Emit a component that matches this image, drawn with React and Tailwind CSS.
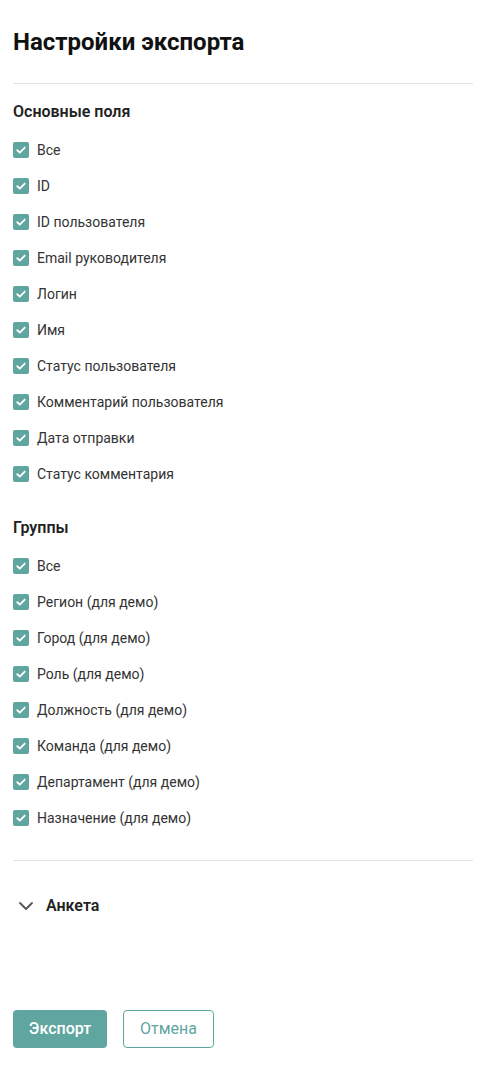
import React from "react";

const main = ["Все","ID","ID пользователя","Email руководителя","Логин","Имя","Статус пользователя","Комментарий пользователя","Дата отправки","Статус комментария"];
const groups = ["Все","Регион (для демо)","Город (для демо)","Роль (для демо)","Должность (для демо)","Команда (для демо)","Департамент (для демо)","Назначение (для демо)"];

function Row({ label }) {
  return (
    <label className="flex items-center h-[36px] gap-[8px] cursor-pointer">
      <span className="w-[16px] h-[16px] rounded-[2px] bg-[#5fa6a0] flex items-center justify-center shrink-0">
        <svg width="12" height="12" viewBox="0 0 12 12" fill="none">
          <path d="M2.3 6.2 L4.8 8.6 L9.7 3.6" stroke="white" strokeWidth="1.9" strokeLinecap="round" strokeLinejoin="round" />
        </svg>
      </span>
      <span className="text-[14px] text-[#333] leading-[20px]">{label}</span>
    </label>
  );
}

export default function App() {
  return (
    <div className="w-[488px] h-[1069px] bg-white pl-[13px] pr-[15px] pt-[28px] flex flex-col" style={{ fontFamily: "Roboto, 'Noto Sans', sans-serif" }}>
      <h1 className="text-[24px] font-bold leading-[28px] text-[#111]">Настройки экспорта</h1>
      <div className="h-px bg-[#e3e3e3] mt-[27px]" />
      <h2 className="mt-[16px] text-[16px] font-semibold leading-[24px] text-[#222]">Основные поля</h2>
      <div className="mt-[8px] flex flex-col">
        {main.map((l, i) => <Row key={i} label={l} />)}
      </div>
      <h2 className="mt-[24px] text-[16px] font-semibold leading-[24px] text-[#222]">Группы</h2>
      <div className="mt-[8px] flex flex-col">
        {groups.map((l, i) => <Row key={i} label={l} />)}
      </div>
      <div className="h-px bg-[#e3e3e3] mt-[24px]" />
      <div className="mt-[33px] flex items-center h-[24px]">
        <svg width="16" height="16" viewBox="0 0 16 16" fill="none" className="ml-[5px]">
          <path d="M2 5 L8 11 L14 5" stroke="#555" strokeWidth="1.8" strokeLinecap="round" strokeLinejoin="round" />
        </svg>
        <span className="ml-[12px] text-[16px] font-semibold text-[#222]">Анкета</span>
      </div>
      <div className="mt-[92px] flex gap-[16px]">
        <button className="h-[38px] w-[94px] rounded-[4px] bg-[#5fa6a0] text-white text-[16px] font-medium">Экспорт</button>
        <button className="h-[38px] w-[91px] rounded-[4px] border border-[#5fa6a0] text-[#5fa6a0] text-[16px] bg-white">Отмена</button>
      </div>
    </div>
  );
}
